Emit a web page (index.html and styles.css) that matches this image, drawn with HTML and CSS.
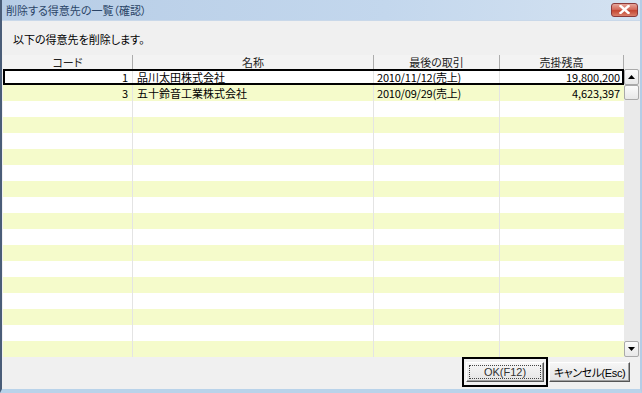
FILE: index.html
```html
<!DOCTYPE html>
<html lang="ja">
<head>
    <meta charset="UTF-8">
    <title>削除する得意先の一覧（確認）</title>
    <link rel="stylesheet" href="styles.css">
</head>
<body>
    <div class="window">
        <div class="titlebar">
            <span class="title">削除する得意先の一覧（確認）</span>
            <span class="close-btn">
                <svg width="11" height="9" viewBox="0 0 11 9"><path d="M1.5 1 L9.5 8 M9.5 1 L1.5 8" stroke="#fff" stroke-width="2.4" stroke-linecap="square"/></svg>
            </span>
        </div>
        <div class="client">
            <div class="message">以下の得意先を削除します。</div>
            <div class="grid">
                <div class="table">
                    <div class="row head">
                        <div class="cell">コード</div>
                        <div class="cell">名称</div>
                        <div class="cell">最後の取引</div>
                        <div class="cell">売掛残高</div>
                    </div>
                    <div class="rows">
                        <div class="row selected">
                            <div class="cell code">1</div>
                            <div class="cell">品川太田株式会社</div>
                            <div class="cell date">2010/11/12(売上)</div>
                            <div class="cell money">19,800,200</div>
                        </div>
                        <div class="row">
                            <div class="cell code">3</div>
                            <div class="cell">五十鈴音工業株式会社</div>
                            <div class="cell date">2010/09/29(売上)</div>
                            <div class="cell money">4,623,397</div>
                        </div>
                        <!-- 16 empty rows -->
                        <div class="row"><div class="cell"></div><div class="cell"></div><div class="cell"></div><div class="cell"></div></div>
                        <div class="row"><div class="cell"></div><div class="cell"></div><div class="cell"></div><div class="cell"></div></div>
                        <div class="row"><div class="cell"></div><div class="cell"></div><div class="cell"></div><div class="cell"></div></div>
                        <div class="row"><div class="cell"></div><div class="cell"></div><div class="cell"></div><div class="cell"></div></div>

                        <div class="row"><div class="cell"></div><div class="cell"></div><div class="cell"></div><div class="cell"></div></div>
                        <div class="row"><div class="cell"></div><div class="cell"></div><div class="cell"></div><div class="cell"></div></div>
                        <div class="row"><div class="cell"></div><div class="cell"></div><div class="cell"></div><div class="cell"></div></div>
                        <div class="row"><div class="cell"></div><div class="cell"></div><div class="cell"></div><div class="cell"></div></div>

                        <div class="row"><div class="cell"></div><div class="cell"></div><div class="cell"></div><div class="cell"></div></div>
                        <div class="row"><div class="cell"></div><div class="cell"></div><div class="cell"></div><div class="cell"></div></div>
                        <div class="row"><div class="cell"></div><div class="cell"></div><div class="cell"></div><div class="cell"></div></div>
                        <div class="row"><div class="cell"></div><div class="cell"></div><div class="cell"></div><div class="cell"></div></div>

                        <div class="row"><div class="cell"></div><div class="cell"></div><div class="cell"></div><div class="cell"></div></div>
                        <div class="row"><div class="cell"></div><div class="cell"></div><div class="cell"></div><div class="cell"></div></div>
                        <div class="row"><div class="cell"></div><div class="cell"></div><div class="cell"></div><div class="cell"></div></div>
                        <div class="row"><div class="cell"></div><div class="cell"></div><div class="cell"></div><div class="cell"></div></div>
                    </div>
                </div>
                <div class="scrollbar">
                    <div class="sb-corner"></div>
                    <div class="sb-btn">
                        <svg width="7" height="4" viewBox="0 0 7 4"><path d="M3.5 0 L7 4 L0 4 Z" fill="#000"/></svg>
                    </div>
                    <div class="sb-thumb"></div>
                    <div class="sb-track"></div>
                    <div class="sb-btn">
                        <svg width="7" height="4" viewBox="0 0 7 4"><path d="M0 0 L7 0 L3.5 4 Z" fill="#000"/></svg>
                    </div>
                </div>
            </div>
            <div class="footer">
                <div class="focus-frame">
                    <button class="btn default">OK(F12)</button>
                </div>
                <button class="btn cancel">キャンセル(Esc)</button>
            </div>
        </div>
    </div>
</body>
</html>
```

FILE: styles.css
```css
* { box-sizing: border-box; margin: 0; padding: 0; }
body {
    width: 642px;
    height: 393px;
    overflow: hidden;
    font-family: "Noto Sans CJK JP", "Liberation Sans", sans-serif;
    font-size: 11px;
    font-feature-settings: "palt";
    color: #000;
    background: #f0f0f0;
}
.window {
    width: 642px;
    height: 393px;
    display: flex;
    flex-direction: column;
    border-left: 2px solid #4a5d78;
    border-right: 2px solid #b4cde6;
    border-bottom: 4px solid #b9d3ea;
    background: #f0f0f0;
}
.titlebar {
    height: 21px;
    flex: none;
    display: flex;
    align-items: center;
    justify-content: space-between;
    padding: 0 2px 0 4px;
    background: linear-gradient(to right, #b7cde6 0%, #c3d7ed 60%, #d4e2f1 100%);
    border-bottom: 1px solid #c9d8e9;
}
.title {
    color: #2a4466;
    line-height: 14px;
}
.close-btn {
    width: 27px;
    height: 14px;
    margin-top: -1px;
    border: 1px solid #8b3a3a;
    border-radius: 3px;
    background: linear-gradient(#e6a59a 0%, #d46a5a 45%, #c44631 55%, #d9806b 100%);
    display: flex;
    align-items: center;
    justify-content: center;
}
.client {
    flex: 1;
    display: flex;
    flex-direction: column;
    padding: 0 0 0 1px;
}
.message {
    padding: 11px 0 0 10px;
    line-height: 14px;
    height: 34px;
}
.grid {
    display: flex;
    height: 302px;
    flex: none;
}
.table {
    width: 621px;
    background: #f0f0f0;
}
.row {
    display: grid;
    grid-template-columns: 130px 241px 126px 124px;
    height: 16px;
    line-height: 16px;
    background: #fff;
}
.rows .row:nth-child(even) { background: #f5fbcb; }
.row .cell {
    border-right: 1px solid #e4e4e4;
    white-space: nowrap;
    overflow: hidden;
    padding-left: 4px;
}
.row .cell:last-child { border-right: none; }
.row.head {
    height: 14px;
    line-height: 14px;
    background: #f3f3f3;
    color: #222;
}
.row.head .cell {
    text-align: center;
    padding: 0;
    overflow: visible;
    border-right: 1px solid #acacac;
}
.row.head .cell:last-child { border-right: 1px solid #acacac; }
.row.selected {
    background: #fff;
    outline: 2px solid #000;
    outline-offset: -2px;
}
.cell.code {
    text-align: right;
    padding-right: 4px;
}
.cell.date { padding-left: 3px; letter-spacing: -0.2px; }
.cell.money {
    text-align: right;
    padding-right: 4px;
    letter-spacing: -0.1px;
}
.scrollbar {
    width: 16px;
    display: flex;
    flex-direction: column;
    background: #eaeaea;
}
.sb-corner {
    height: 14px;
    background: #f0f0f0;
}
.sb-btn, .sb-thumb {
    height: 16px;
    margin: 0 1px 0 0;
    border: 1px solid #a9a9a9;
    border-radius: 2px;
    background: linear-gradient(#fbfbfb, #e8e8e8);
    display: flex;
    align-items: center;
    justify-content: center;
}
.sb-thumb { height: 15px; }
.sb-track { flex: 1; }
.footer {
    flex: 1;
    display: flex;
    justify-content: flex-end;
    align-items: center;
    gap: 1px;
    padding: 0 10px 2px 0;
}
.focus-frame {
    border: 2px solid #000;
    padding: 3px 2px;
}
.btn {
    height: 20px;
    font-family: "Liberation Sans", "Noto Sans CJK JP", sans-serif;
    font-size: 11px;
    font-feature-settings: "palt";
    white-space: nowrap;
    color: #000;
    background: linear-gradient(#f6f6f6, #e4e4e4);
    border: 1px solid;
    border-color: #fff #555 #555 #fff;
    box-shadow: inset -1px -1px 0 #a0a0a0;
    padding: 0;
}
.btn.default {
    width: 78px;
    color: #333;
    outline: 1px dotted #444;
    outline-offset: -4px;
}
.btn.cancel {
    width: 81px;
    letter-spacing: -0.4px;
}
```
